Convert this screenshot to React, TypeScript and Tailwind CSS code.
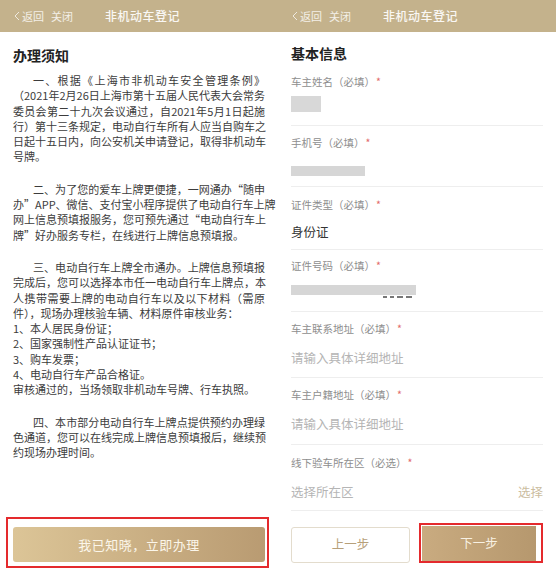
import * as React from 'react';

const font = { fontFamily: '"Noto Sans CJK SC", "Noto Sans", sans-serif' };

function Header() {
  return (
    <div className="h-[32px] bg-[#c4b28c] flex items-center pl-[14px] text-white/80 shrink-0">
      <div className="flex items-center text-[11px] w-[91px]">
        <svg width="6" height="10" viewBox="0 0 6 10" className="mr-[2px]">
          <path d="M5 1 L1 5 L5 9" fill="none" stroke="currentColor" strokeWidth="0.9" />
        </svg>
        <span>返回</span>
        <span className="ml-[7px]">关闭</span>
      </div>
      <span className="text-[12px] font-medium tracking-[0.5px] text-white/90">非机动车登记</span>
    </div>
  );
}

function Line({ text, justify = true, indent = false }: { text: string; justify?: boolean; indent?: boolean }) {
  return (
    <div
      className={
        'h-[15.3px] leading-[15.3px] whitespace-nowrap ' +
        (justify ? 'text-justify [text-align-last:justify] ' : '') +
        (indent ? 'pl-[20px]' : '')
      }
    >
      {text}
    </div>
  );
}

const paragraphs: { text: string; justify?: boolean; indent?: boolean }[][] = [
  [
    { text: '一、根据《上海市非机动车安全管理条例》', indent: true },
    { text: '（2021年2月26日上海市第十五届人民代表大会常务' },
    { text: '委员会第二十九次会议通过，自2021年5月1日起施' },
    { text: '行）第十三条规定，电动自行车所有人应当自购车之' },
    { text: '日起十五日内，向公安机关申请登记，取得非机动车' },
    { text: '号牌。', justify: false },
  ],
  [
    { text: '二、为了您的爱车上牌更便捷，一网通办“随申', indent: true },
    { text: '办”APP、微信、支付宝小程序提供了电动自行车上牌' },
    { text: '网上信息预填报服务，您可预先通过“电动自行车上' },
    { text: '牌”好办服务专栏，在线进行上牌信息预填报。', justify: false },
  ],
  [
    { text: '三、电动自行车上牌全市通办。上牌信息预填报', indent: true },
    { text: '完成后，您可以选择本市任一电动自行车上牌点，本' },
    { text: '人携带需要上牌的电动自行车以及以下材料（需原' },
    { text: '件），现场办理核验车辆、材料原件审核业务：', justify: false },
    { text: '1、本人居民身份证；', justify: false },
    { text: '2、国家强制性产品认证证书；', justify: false },
    { text: '3、购车发票；', justify: false },
    { text: '4、电动自行车产品合格证。', justify: false },
    { text: '审核通过的，当场领取非机动车号牌、行车执照。', justify: false },
  ],
  [
    { text: '四、本市部分电动自行车上牌点提供预约办理绿', indent: true },
    { text: '色通道，您可以在线完成上牌信息预填报后，继续预' },
    { text: '约现场办理时间。', justify: false },
  ],
];

function NoticePanel() {
  return (
    <div className="w-[278px] h-[569px] flex flex-col bg-white">
      <Header />
      <div className="px-[13px] flex-1 flex flex-col">
        <h2 className="mt-[13px] text-[14px] leading-[20px] font-bold text-[#222]">办理须知</h2>
        <div className="mt-[8px] text-[11px] text-[#3c3c3c] flex flex-col gap-[17px]">
          {paragraphs.map((p, i) => (
            <div key={i}>
              {p.map((l, j) => (
                <Line key={j} {...l} />
              ))}
            </div>
          ))}
        </div>
      </div>
      <div className="ml-[6px] w-[263px] h-[51px] mb-[1px] border-2 border-[#e42a2d] pt-[8px] pl-[5px] pr-[2px]">
        <button className="w-full h-[35px] rounded-[3px] bg-gradient-to-r from-[#dcc597] to-[#b99b72] text-[13px] text-[#fbf6ea] tracking-[0.5px]">
          我已知晓，立即办理
        </button>
      </div>
    </div>
  );
}

function Label({ children }: { children: React.ReactNode }) {
  return (
    <div className="h-[14px] leading-[14px] text-[10.5px] text-[#8e8e8e]">
      {children}
      <span className="ml-[1px] text-[#e26a6a]">*</span>
    </div>
  );
}

function Field({ className, children }: { className: string; children: React.ReactNode }) {
  return <div className={'border-b border-[#eeeeee] ' + className}>{children}</div>;
}

function InfoPanel() {
  return (
    <div className="w-[278px] h-[569px] flex flex-col bg-white">
      <Header />
      <div className="px-[13px] flex flex-col">
        <h2 className="mt-[11px] text-[14px] leading-[20px] font-bold text-[#222]">基本信息</h2>

        <Field className="pt-[12px] pb-[13px]">
          <Label>车主姓名（必填）</Label>
          <div className="mt-[7px] w-[30px] h-[16px] bg-[#d8d8d8]" />
        </Field>

        <Field className="pt-[10px] pb-[10px]">
          <Label>手机号（必填）</Label>
          <div className="mt-[16px] w-[74px] h-[10px] bg-[#d6d6d6]" />
        </Field>

        <Field className="pt-[11px] pb-[8px]">
          <Label>证件类型（必填）</Label>
          <div className="mt-[11px] h-[18px] leading-[18px] text-[12.5px] text-[#333]">身份证</div>
        </Field>

        <Field className="pt-[9px] pb-[12px]">
          <Label>证件号码（必填）</Label>
          <div className="mt-[12px] w-[125px] h-[10px] bg-[#d6d6d6]" />
          <div className="mt-[1px] ml-[92px] flex gap-[3px] h-[3px]">
            <div className="w-[4px] h-[2px] bg-[#777]" />
            <div className="w-[4px] h-[2px] bg-[#777]" />
            <div className="w-[6px] h-[2px] bg-[#777]" />
            <div className="w-[6px] h-[2px] bg-[#777]" />
          </div>
        </Field>

        <Field className="pt-[10px] pb-[10px]">
          <Label>车主联系地址（必填）</Label>
          <div className="mt-[13px] h-[18px] leading-[18px] text-[12.5px] text-[#b5b5b5]">请输入具体详细地址</div>
        </Field>

        <Field className="pt-[10px] pb-[11px]">
          <Label>车主户籍地址（必填）</Label>
          <div className="mt-[13px] h-[18px] leading-[18px] text-[12.5px] text-[#b5b5b5]">请输入具体详细地址</div>
        </Field>

        <Field className="pt-[11px] pb-[9px]">
          <Label>线下验车所在区（必选）</Label>
          <div className="mt-[13px] h-[18px] leading-[18px] text-[12.5px] flex justify-between">
            <span className="text-[#b5b5b5]">选择所在区</span>
            <span className="text-[#cbbd9f]">选择</span>
          </div>
        </Field>

        <div className="mt-[12px] flex items-center">
          <button className="mt-[3px] w-[122px] h-[36px] rounded-[3px] border border-[#e3dccd] text-[12.5px] text-[#b7a07a] bg-white">
            上一步
          </button>
          <div className="ml-[9px] w-[127px] h-[40px] border-2 border-[#e42a2d] pl-[1px] pr-[5px] flex items-center">
            <button className="w-full h-[35px] bg-gradient-to-r from-[#c9ab80] to-[#b6986e] text-[12.5px] text-[#f8f1e3]">
              下一步
            </button>
          </div>
        </div>
      </div>
    </div>
  );
}

export default function App() {
  return (
    <div className="w-[556px] h-[569px] flex overflow-hidden bg-white" style={font}>
      <NoticePanel />
      <InfoPanel />
    </div>
  );
}
